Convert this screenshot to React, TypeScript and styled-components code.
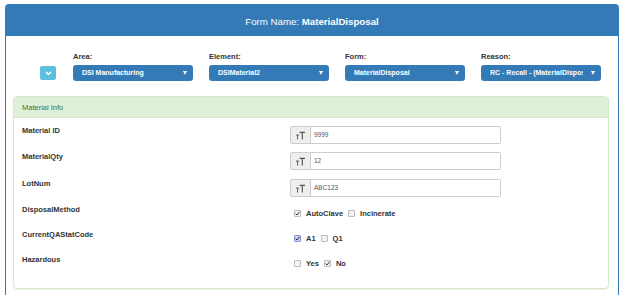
import React from "react";
import styled, { createGlobalStyle } from "styled-components";

const Global = createGlobalStyle`
  html, body { margin: 0; padding: 0; background: #fff; }
  body { font-family: "Liberation Sans", Arial, Helvetica, sans-serif; color: #333; }
  * { box-sizing: border-box; }
`;

const Page = styled.div`
  padding: 4px 5px 0 5px;
  height: 295px;
  overflow: hidden;
`;

const OuterPanel = styled.div`
  border: 1px solid #337ab7;
  border-radius: 4px 4px 0 0;
  border-bottom: none;
  background: #fff;
  height: 320px;
`;

const Header = styled.div`
  height: 31px;
  background: #337ab7;
  color: #fff;
  font-size: 9.7px;
  display: flex;
  align-items: center;
  justify-content: center;
  padding-top: 1px;
  b { font-weight: bold; }
`;

const Body = styled.div`
  padding: 8px 9px 0 7px;
`;

const FilterRow = styled.div`
  display: flex;
  align-items: flex-end;
  padding-left: 27px;
  gap: 16px;
  height: 37px;
`;

const ToggleButton = styled.button`
  width: 16px;
  height: 14px;
  margin: 0 1px 1px 0;
  padding: 0;
  border: none;
  border-radius: 2px;
  background: #5bc0de;
  display: flex;
  align-items: center;
  justify-content: center;
`;

const Field = styled.div`
  display: flex;
  flex-direction: column;
  width: 120px;
`;

const FieldLabel = styled.div`
  font-size: 7.5px;
  font-weight: bold;
  line-height: 10px;
  margin-bottom: 3px;
  color: #333;
`;

const SelectBox = styled.div`
  display: flex;
  align-items: center;
  height: 16px;
  background: #337ab7;
  border-radius: 3px;
  color: #fff;
  font-size: 7px;
  font-weight: bold;
  padding: 0 6px 0 9px;
`;

const SelectText = styled.span`
  flex: 1;
  white-space: nowrap;
  overflow: hidden;
  margin-right: 8px;
  line-height: 16px;
`;

const Caret = styled.span`
  width: 0;
  height: 0;
  border-left: 2.5px solid transparent;
  border-right: 2.5px solid transparent;
  border-top: 4px solid #fff;
`;

const InnerPanel = styled.div`
  margin-top: 15px;
  border: 1px solid #d6e9c6;
  border-radius: 4px;
  box-shadow: 0 1px 1px rgba(0, 0, 0, 0.06);
`;

const InnerHeading = styled.div`
  height: 21px;
  background: #dff0d8;
  border-bottom: 1px solid #d6e9c6;
  color: #3c763d;
  font-size: 7.5px;
  line-height: 21px;
  padding-left: 8px;
`;

const InnerBody = styled.div`
  padding: 8px 0 16px 8px;
  display: flex;
  flex-direction: column;
`;

const Row = styled.div<{ $gap: number }>`
  display: flex;
  align-items: flex-start;
  height: 18px;
  margin-bottom: ${(p) => p.$gap}px;
`;

const RowLabel = styled.div<{ $offset?: number }>`
  width: 268px;
  font-size: 7.5px;
  font-weight: bold;
  line-height: 10px;
  padding-top: ${(p) => p.$offset ?? 0}px;
  color: #333;
`;

const InputGroup = styled.div`
  display: flex;
  width: 211px;
  height: 18px;
`;

const Addon = styled.div`
  width: 21px;
  background: #eee;
  border: 1px solid #ccc;
  border-radius: 2px 0 0 2px;
  display: flex;
  align-items: center;
  justify-content: center;
`;

const TextInput = styled.div`
  flex: 1;
  border: 1px solid #ccc;
  border-left: none;
  border-radius: 0 2px 2px 0;
  font-size: 6.5px;
  line-height: 16px;
  padding-left: 3px;
  color: #555;
`;

const CheckGroup = styled.div`
  display: flex;
  align-items: center;
  height: 18px;
  padding-left: 4px;
`;

const CheckItem = styled.label`
  display: flex;
  align-items: center;
  margin-right: 5px;
  font-size: 7.5px;
  font-weight: bold;
  color: #333;
`;

const Box = styled.span<{ $focus?: boolean }>`
  width: 7px;
  height: 7px;
  margin-right: 5px;
  border: 1px solid ${(p) => (p.$focus ? "#8a95d6" : "#bbb")};
  background: ${(p) => (p.$focus ? "#c9cff2" : "#f3f3f3")};
  border-radius: 1px;
  display: flex;
  align-items: center;
  justify-content: center;
`;

const Chevron = () => (
  <svg width="7" height="5" viewBox="0 0 7 5">
    <path d="M1 1 L3.5 3.5 L6 1" stroke="#fff" strokeWidth="1.5" fill="none" />
  </svg>
);

const TextSizeIcon = () => (
  <svg width="9" height="9" viewBox="0 0 10 10">
    <path d="M4 1.5 H10 M7 1.5 V9.5" stroke="#555" strokeWidth="1.3" fill="none" />
    <path d="M0 4.5 H3.4 M1.7 4.5 V9.5" stroke="#555" strokeWidth="1" fill="none" />
  </svg>
);

const Tick = () => (
  <svg width="5" height="5" viewBox="0 0 5 5">
    <path d="M0.6 2.6 L2 4 L4.5 0.8" stroke="#333" strokeWidth="1" fill="none" />
  </svg>
);

type Opt = { label: string; checked?: boolean; focus?: boolean };

const Check = ({ o }: { o: Opt }) => (
  <CheckItem>
    <Box $focus={o.focus}>{o.checked && <Tick />}</Box>
    {o.label}
  </CheckItem>
);

const filters = [
  { label: "Area:", value: "DSI Manufacturing" },
  { label: "Element:", value: "DSIMaterial2" },
  { label: "Form:", value: "MaterialDisposal" },
  { label: "Reason:", value: "RC - Recall - (MaterialDisposal)" },
];

const textRows = [
  { label: "Material ID", value: "9999", gap: 8 },
  { label: "MaterialQty", value: "12", gap: 9 },
  { label: "LotNum", value: "ABC123", gap: 7 },
];

const checkRows: { label: string; opts: Opt[] }[] = [
  { label: "DisposalMethod", opts: [{ label: "AutoClave", checked: true }, { label: "Incinerate" }] },
  { label: "CurrentQAStatCode", opts: [{ label: "A1", checked: true, focus: true }, { label: "Q1" }] },
  { label: "Hazardous", opts: [{ label: "Yes" }, { label: "No", checked: true }] },
];

export default function App() {
  return (
    <>
      <Global />
      <Page>
        <OuterPanel>
          <Header>
            <span>
              Form Name: <b>MaterialDisposal</b>
            </span>
          </Header>
          <Body>
            <FilterRow>
              <ToggleButton>
                <Chevron />
              </ToggleButton>
              {filters.map((f) => (
                <Field key={f.label}>
                  <FieldLabel>{f.label}</FieldLabel>
                  <SelectBox>
                    <SelectText>{f.value}</SelectText>
                    <Caret />
                  </SelectBox>
                </Field>
              ))}
            </FilterRow>
            <InnerPanel>
              <InnerHeading>Material Info</InnerHeading>
              <InnerBody>
                {textRows.map((r) => (
                  <Row key={r.label} $gap={r.gap}>
                    <RowLabel>{r.label}</RowLabel>
                    <InputGroup>
                      <Addon>
                        <TextSizeIcon />
                      </Addon>
                      <TextInput>{r.value}</TextInput>
                    </InputGroup>
                  </Row>
                ))}
                {checkRows.map((r, i) => (
                  <Row key={r.label} $gap={i === checkRows.length - 1 ? 0 : 7}>
                    <RowLabel $offset={1}>{r.label}</RowLabel>
                    <CheckGroup>
                      {r.opts.map((o) => (
                        <Check key={o.label} o={o} />
                      ))}
                    </CheckGroup>
                  </Row>
                ))}
              </InnerBody>
            </InnerPanel>
          </Body>
        </OuterPanel>
      </Page>
    </>
  );
}
